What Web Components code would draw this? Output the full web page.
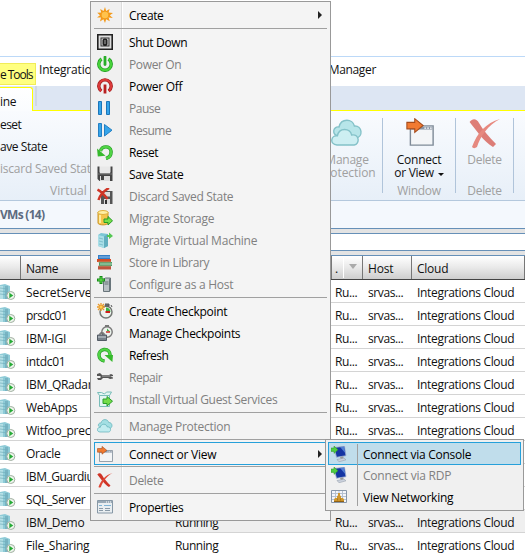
<!DOCTYPE html>
<html lang="en">
<head>
<meta charset="utf-8">
<title>Virtual Machine Manager</title>
<style>
html,body{margin:0;padding:0;width:525px;height:554px;overflow:hidden;background:#fff}
body{font:12px/16px "Open Sans","Noto Sans",sans-serif;color:#111;position:relative}
</style>
</head>
<body>
<vm-app></vm-app>
<script>
const ICONS = {
create:'<path d="M8 0l1.2 4.1L12.6 2l-1 3.6 4.4.4-3.2 2.2L15.8 11l-4.2-.4 1.2 3.6-3.6-2L8 16l-1.6-3.8-3.4 2.3 1-4L0 10.6l3-2.4L.2 5.8l4-.2L3.2 2l3.4 2z" fill="#f39a1b"/><circle cx="8" cy="8" r="3.3" fill="#ffc34d"/>',
shutdown:'<path d="M.8.8h14.400v14.400H.8z" fill="#ddd" stroke="#222" stroke-width="1.600"/><path d="M3.500 3.500h9v9h-9z" fill="#333"/><path d="M4.500 4.500h7v7h-7z" fill="#d8d8d8"/><rect x="5.500" y="4.500" width="5" height="7.500" rx="2" fill="#222"/><path d="M8 6v4" stroke="#aaa"/>',
on:'<path d="M4.500 3A6.200 6.200 0 1 0 11.500 3" fill="none" stroke="#239e25" stroke-width="3.400"/><path d="M4.500 3A6.200 6.200 0 1 0 11.500 3" fill="none" stroke="#48d43a" stroke-width="2"/><path d="M8 1v7.500" stroke="#28ad28" stroke-width="2.800" stroke-linecap="round"/>',
off:'<path d="M4.300 13A6.200 6.200 0 1 1 11.700 13" fill="none" stroke="#9f1c1c" stroke-width="3.400"/><path d="M4.300 13A6.200 6.200 0 1 1 11.700 13" fill="none" stroke="#dc3a3a" stroke-width="2"/><path d="M8 6.500v9" stroke="#b82020" stroke-width="2.800"/>',
pause:'<path d="M1.500 1.500h3v13h-3zm8 0h3v13h-3z" fill="#35a5ea" stroke="#1b75b9"/>',
resume:'<path d="M1.500 1.500h3v13h-3zM7.500 2.500v11.500l7.500-5.800z" fill="#35a5ea" stroke="#247fc2"/>',
reset:'<path d="M3.500 7C5 1.500 13 1.500 14 7c.4 3.500-1.500 6.500-5 7.500" fill="none" stroke="#219a22" stroke-width="3.400"/><path d="M3.500 7C5 1.500 13 1.500 14 7c.4 3.500-1.500 6.500-5 7.500" fill="none" stroke="#50d344" stroke-width="2.200"/><path d="M0 4.500L.8 12.500l7.700-.8z" fill="#36b92c"/>',
save:'<path d="M.5.5h2v6h11v-6h2v14.500h-13l-2-2z" fill="#444"/><path d="M3 .5h10v7H3z" fill="#e8e8e8"/><path d="M3 10h10v5H3z" fill="#ddd"/><path d="M4 10h3v4H4z" fill="#444"/><path d="M1 8h14" stroke="#777"/>',
discard:'<path d="M4 3h11.500v13H4z" fill="#555"/><path d="M7 4h6v4.500H7zM7 11h6v5H7z" fill="#ddd"/><path d="M8 12h2v4H8z" fill="#333"/><path d="M.5 1.500c4 2 7.500 6 10 9.500M12 0C6.500 3 3 7 1.500 12" fill="none" stroke="#cf3526" stroke-width="2.500"/>',
storage:'<path d="M1 2v11c0 2.500 10 2.500 10 0V2z" fill="#f5c54c" stroke="#c99529"/><ellipse cx="6" cy="2.500" rx="5" ry="2" fill="#fff0a4" stroke="#e0af3b"/><path d="M3 5v8" stroke="#ffeaa0" stroke-width="2"/><path d="M7 9h4V6.500l4.500 4.300L11 15v-2.500H7z" fill="#78df49" stroke="#279a26"/>',
machine:'<path d="M1 3l3-2 7 1v12l-4 2-6-2z" fill="#7bc7d5"/><path d="M1 3l6 1.500V16l-6-2z" fill="#a9dee7"/><path d="M7 4.500L11 2v12l-4 2z" fill="#62aebf"/><path d="M2 6l4 1M2 9l4 1M2 12l4 1" stroke="#7fc0cc"/><path d="M10 3h2V.5L16 4l-4 3V5h-2z" fill="#54c753"/>',
library:'<path d="M1 1h12v4H1z" fill="#347ec6"/><path d="M2 3h11" stroke="#94bfe9"/><path d="M0 5h14v3H0z" fill="#d34c26"/><path d="M2 8h13v4H2z" fill="#4b9b67"/><path d="M3 10h12" stroke="#b8dcbf"/><path d="M1 12h13v3.500H1z" fill="#bd543d"/><path d="M1 8h13M1 12h13" stroke="#b7a57b" stroke-width=".7"/>',
host:'<path d="M6.500 3l2-1h5l-1 2v11.500h-6zM12.500 4l1-2v12l-1 1.500" fill="#b9c0c4" stroke="#69757b"/><path d="M7.500 6h4m-4 2h4" stroke="#667277"/><path d="M4 0v8M0 4h8" stroke="#168c18" stroke-width="3"/><path d="M4 1v6M1 4h6" stroke="#68e34e"/>',
checkpoint:'<circle cx="9" cy="9" r="6" fill="#eef2ee" stroke="#737873" stroke-width="1.500"/><path d="M8 1h4v2H8M14 2l1 2" stroke="#555" fill="#777"/><path d="M9 8V4.500A4.500 4.500 0 0 1 13.500 9z" fill="#36b744"/><path d="M8.500 9h4.500" stroke="#ce1e19" stroke-width="2"/><path d="M4 0v8M0 4h8M1 1l6 6M1 7l6-6" stroke="#e99928" stroke-width="1.300"/><circle cx="4" cy="4" r="1.500" fill="#ffce50"/>',
manage:'<circle cx="10" cy="7" r="5.200" fill="#eef2ee" stroke="#777" stroke-width="1.400"/><path d="M8 0h4v2H8" fill="#777"/><path d="M10 6V3.500L13.500 7z" fill="#36b744"/><path d="M9 7h4" stroke="#cc302c" stroke-width="1.500"/><path d="M3 10V8h4v2" fill="none" stroke="#555"/><path d="M.5 10h9v5.500h-9z" fill="#78818a" stroke="#535b64"/><path d="M1 12h8" stroke="#ccd4d9"/>',
refresh:'<path d="M7.500 14C.5 13 0 3.500 7 2.500c4-.3 6 2 6.200 6" fill="none" stroke="#219a22" stroke-width="3.400"/><path d="M7.500 14C.5 13 0 3.500 7 2.500c4-.3 6 2 6.200 6" fill="none" stroke="#50d344" stroke-width="2.200"/><path d="M7.500 8H16l-.6 7z" fill="#36b92c"/>',
repair:'<path d="M0 5l3-1 2 2h7l2-1 2 1v1l-3 .5 3 1v1l-3 .5-2-1H6l-2 2H1L0 9h3l1-1-1-1H0z" fill="#555"/><path d="M5 7h8" stroke="#aaa"/>',
install:'<path d="M2.500 4.500h10v11h-10zM2.500 4.500L.5 1.500h4l3 1.500 2-2h5l-2 3.500" fill="#e2f5f2" stroke="#79bdb9"/><path d="M6 8h4V5.500l5.500 4.700L10 15v-2.500H6z" fill="#75dc49" stroke="#2a9e2c"/>',
cloud:'<path d="M4 9.500C0 9 1 4.500 4 5 5 .3 11 .8 11.700 4.500c4-.3 4.500 5.500.8 6" fill="#a3dfe3" stroke="#5fb0b8" stroke-width=".7"/><path d="M3 14c-4-.4-3-5 .2-4.600C4 5 9.700 5.500 10.300 9c4-.8 4.200 4.700 1.300 5z" fill="#c1ecef" stroke="#5fb0b8" stroke-width=".7"/>',
connect:'<path d="M2.500 4.500h13v11h-13z" fill="#f3f5f7" stroke="#7f8b98" stroke-width=".8"/><path d="M3 5h12v1.600H3z" fill="#8995a6"/><path d="M10.500 5.800h1m.6 0h1m.6 0h1" stroke="#fff" stroke-width=".8"/><path d="M.5 2.500H5V.4L9.800 4.300 5 8.200V6.200H.5z" fill="#f17a31" stroke="#a54b1b" stroke-width=".6"/>',
del:'<path d="M.3 2.500C2 .4 3.800 1 5 3c2 3.500 5 7 8.500 10.500L12 15C7.500 12.500 3.500 6.500.3 2.500z" fill="#cf3326"/><path d="M15.500 1C9.500 4 5.500 10 4 15c-1 .8-2 .7-2.500 0C4 8 8.500 3 15.500 1z" fill="#df4634"/>',
props:'<path d="M.5 1.500h15v12.500H.5z" fill="#e9eef1" stroke="#8798a6"/><path d="M1 2h14v2H1z" fill="#99a9b6"/><path d="M2 6.500h3m2 0h7" stroke="#7fb4d6"/><path d="M2 9.500h4m2 0h5M2 11.500h4m2 0h5" stroke="#8a9aa8"/><path d="M9 3h1m1 0h1m1 0h1" stroke="#fff"/>',
monitor:'<path d="M3 1.500l10.500-1.300 1.500 9.500-9.500 1.600z" fill="#1535a3" stroke="#a5b4ce" stroke-width=".8"/><path d="M9 1l4.200-.5 1 6.500z" fill="#537fd3"/><path d="M9 11l3-.6 1 2.600-3 .6z" fill="#999"/><path d="M6 13.500l7-1.500 2 1.800-7 2z" fill="#cbd2dd" stroke="#8d96a5" stroke-width=".5"/><path d="M0 2h3V0l4 3.700L3 7.400V5.400H0z" fill="#50ce43" stroke="#2b912a" stroke-width=".5"/>',
network:'<path d="M.5 1.500h15v12H.5z" fill="#f3f5fa" stroke="#8796a8"/><path d="M1 4.500h14M1 7.500h14M1 10.500h14M4.500 2v11M8 2v11M11.500 2v11" stroke="#b5c1d1"/><path d="M7 4h2v2.500l1 .5v2h2l1 1.500V12H3v-1.500L4 9h2V7l1-.5z" fill="#cf962c"/><path d="M3 12.500h10" stroke="#8f6117"/><path d="M6.500 9.500v2m3-2v2" stroke="#8f6117" stroke-width=".6"/>',
vm:'<path d="M0 1l5-1 5 2v13H0z" fill="#8ecbd7"/><path d="M0 2h3v13H0z" fill="#b5e0e6"/><path d="M5 2h3v13H5z" fill="#78b4c3"/><path d="M0 4l8 1M0 7l8 1M0 10l8 1" stroke="#72afbc" stroke-width=".7"/><circle cx="10.800" cy="11.500" r="4" fill="#eff5ee" stroke="#a1b0a1"/><path d="M9.300 8.800v5.400l4-2.700z" fill="#26ab36"/>'
};
const BASE='<style>:host{display:block;box-sizing:border-box}*{box-sizing:border-box}</style>';
class Base extends HTMLElement{
  constructor(){super();this.attachShadow({mode:'open'})}
  connectedCallback(){this.shadowRoot.innerHTML=BASE+this.view();this.after?.()}
  attr(n,d=''){return this.getAttribute(n)??d}
}
// Text whose letter spacing is adjusted to occupy a requested width
customElements.define('ui-text',class extends Base{
  view(){return `<style>:host{display:inline-block;white-space:pre;line-height:16px;flex:none}</style><span>${this.attr('t')}</span>`}
  after(){const w=+this.attr('w',0);if(!w)return;const s=this.shadowRoot.querySelector('span');
    const cur=s.getBoundingClientRect().width;const sp=(w+.3-cur)/this.attr('t').length;s.style.letterSpacing=sp.toFixed(3)+'px'}
});
customElements.define('ui-icon',class extends Base{
  view(){const s=this.attr('size',16);return `<style>:host{width:${s}px;height:${s}px;flex:none}svg{display:block}</style><svg width="${s}" height="${s}" viewBox="0 0 16 16">${ICONS[this.attr('name')]}</svg>`}
});
customElements.define('menu-item',class extends Base{
  view(){return `<style>
  :host{display:flex;align-items:center;height:22px;padding:0 4px 0 3px;color:#000}
  :host([off]){color:#808080}
  :host([hot]){outline:1px solid #26a0da;outline-offset:-1px;height:23px;margin-bottom:-1px}
  :host([fill]){background:#c0ddeb}
  ui-icon{margin-right:16px}ui-text{margin-top:2px}
  i{margin-left:auto;margin-right:1px;border:4px solid transparent;border-left-color:#222;border-right:0}
  </style><ui-icon name="${this.attr('icon')}"></ui-icon><ui-text t="${this.attr('t')}" w="${this.attr('w')}"></ui-text>${this.hasAttribute('more')?'<i></i>':''}`}
});
customElements.define('menu-line',class extends Base{
  view(){return '<style>:host{height:5px;padding-top:2px}div{height:1px;background:#a0a0a0}</style><div></div>'}
});
customElements.define('context-menu',class extends Base{
  view(){return `<style>:host{position:absolute;border:1px solid #999;background:linear-gradient(90deg,#f0f0f0 var(--g),#dcdcdc var(--g),#dcdcdc calc(var(--g) + 1px),#fff calc(var(--g) + 1px),#fff calc(var(--g) + 2px),#f4f4f4 calc(var(--g) + 2px));padding:2px 3px}
  :host([flat]){background:#f0f0f0}
  .rule{display:none}:host([flat]) .rule{display:block;position:absolute;left:31px;top:4px;bottom:4px;width:1px;background:#a0a0a0}
  </style><slot></slot><div class="rule"></div>`}
});
const it=(icon,t,w,x='')=>`<menu-item icon="${icon}" t="${t}" w="${w}" ${x}></menu-item>`;
customElements.define('ribbon-group',class extends Base{
  view(){return `<style>:host{display:flex;flex-direction:column;align-items:center;height:75px;border-right:1px solid #b0c4da;color:#a0a0a0;flex:none}
  .i{height:34px;flex:none;display:flex;align-items:flex-start}.a{height:28px;flex:none;display:flex;flex-direction:column;align-items:center}
  .a ui-text{height:13px}.foot{margin-top:3px}.first{color:var(--first,inherit)}.r{display:flex}
  b{border:3px solid transparent;border-top-color:#111;border-bottom:0;margin:8px 0 0 4px}
  </style><div class="i"><slot></slot></div><div class="a first"><ui-text t="${this.attr('a')}" w="${this.attr('aw')}"></ui-text>${this.hasAttribute('b')?`<span class="r"><ui-text t="${this.attr('b')}" w="${this.attr('bw')}"></ui-text>${this.hasAttribute('more')?'<b></b>':''}</span>`:''}</div>${this.attr('foot')?`<div class="foot"><ui-text t="${this.attr('foot')}" w="${this.attr('fw')}"></ui-text></div>`:''}`}
});
customElements.define('app-ribbon',class extends Base{
  view(){return `<style>
  .title{height:56px;background:#fff}.tabs{height:30px;border-top:1px solid #bcd9f8;display:flex;background:#fff}
  .ctx{width:36px;height:22px;margin-top:6px;background:#ffff80;border:1px solid #f0ec58;border-left:0;padding-top:3px}
  .tab{padding-top:5px;margin-left:3px}.clip{width:51px;overflow:hidden}.mgr{margin-left:auto;margin-right:149px}
  .band{height:25px;background:#dde6f3;display:flex;box-shadow:inset 0 -1px #ff0}
  .sel{width:33px;height:24px;margin-top:1px;background:linear-gradient(#fff,#fafcfe);border:solid #ff0;border-width:1px 1px 0 0;border-radius:0 3px 0 0;padding-top:6px}
  .gap{width:2px;height:20px;margin-left:2px;background:#cfd8e5}
  .body{height:90px;background:linear-gradient(#f9fbfe,#e7eff8);border-bottom:1px solid #b4c8dd;display:flex;padding-top:7px;overflow:hidden}
  .left{width:90px;overflow:hidden;flex:none;display:flex;flex-direction:column;margin-top:-1px;color:#a0a0a0}.left ui-text{height:22px;flex:none}
  .left .v{margin:0 0 0 50px}.right{display:flex;margin-left:222px}
  .blk{color:#111}
  </style>
  <div class="title"></div>
  <div class="tabs"><div class="ctx"><ui-text t="e Tools" w="32"></ui-text></div><div class="tab clip"><ui-text t="Integrations" w="65"></ui-text></div><div class="tab mgr"><ui-text t="Manager" w="47"></ui-text></div></div>
  <div class="band"><div class="sel"><ui-text t="ine" w="16"></ui-text></div><div class="gap"></div></div>
  <div class="body"><div class="left"><ui-text class="blk" t="eset" w="21"></ui-text><ui-text class="blk" t="ave State" w="47"></ui-text><ui-text t="iscard Saved State" w="97"></ui-text><ui-text class="v" t="Virtual Machine" w="88"></ui-text></div>
  <div class="right">
  <ribbon-group style="width:71px" a="Manage" aw="43" b="Protection" bw="57"><ui-icon name="cloud" size="32" style="opacity:.75;margin-top:-1px"></ui-icon></ribbon-group>
  <ribbon-group style="width:73px;--first:#111" a="Connect" aw="44" b="or View" bw="39" more foot="Window" fw="43"><ui-icon name="connect" size="28" style="margin-left:2px"></ui-icon></ribbon-group>
  <ribbon-group style="width:58px" a="Delete" aw="34" foot="Delete" fw="34"><ui-icon name="del" size="32" style="opacity:.62;margin-top:-1px"></ui-icon></ribbon-group>
  </div></div>`}
});
const ROWS=[['SecretServer',70],['prsdc01',41],['IBM-IGI',40],['intdc01',39],['IBM_QRadar',66],['WebApps',51],['Witfoo_prec',64],['Oracle',34],['IBM_Guardiu',67],['SQL_Server',59],['IBM_Demo',58],['File_Sharing',63]];
customElements.define('vm-row',class extends Base{
  view(){const low=this.hasAttribute('low'),right=!this.hasAttribute('covered');
  return `<style>:host{display:grid;grid-template-columns:26px 149px 160px 33px 49px 1fr;height:23px;border-bottom:1px solid #d4d4d4;align-items:center;color:#111;background:#fff;overflow:hidden}
  :host([sel]){background:#efefef}ui-icon{margin-top:2px}ui-text{margin-top:3px}.n{width:64px;overflow:hidden}</style><ui-icon name="vm"></ui-icon><div class="n"><ui-text t="${this.attr('t')}" w="${this.attr('w')}"></ui-text></div>${low?'<ui-text t="Running" w="43"></ui-text>':'<span></span>'}${right?'<ui-text t="Ru..." w="22"></ui-text><ui-text t="srvas..." w="35"></ui-text><ui-text t="Integrations Cloud" w="97"></ui-text>':''}`}
});
customElements.define('vm-list',class extends Base{
  view(){return `<style>
  .h{height:27px;background:#f4f8fd;color:#5d6b80;font-weight:bold;padding-top:6px}
  .g{height:6px;background:#e3e3e3;border:solid #6690b8;border-width:1px 0}.s{height:16px;background:#fff}
  .head{height:24px;display:grid;grid-template-columns:21px 311px 31px 49px 1fr;background:linear-gradient(#fff,#e9e9e9 50%,#cecece);border-bottom:1px solid #444;align-items:stretch}
  .head>div{border-right:1px solid #777;display:flex;align-items:center;padding-left:5px}.head ui-text{margin-top:2px}
  .head>.st{padding-left:3px}.st b{width:1px;height:20px;background:#fff;margin-left:5px}.st i{border:4px solid transparent;border-top:5px solid #aaa;border-bottom:0;margin-left:5px;margin-top:-3px}
  </style><div class="h"><ui-text t="VMs (14)" w="44"></ui-text></div><div class="g"></div><div class="s"></div><div class="g"></div>
  <div class="head"><div></div><div><ui-text t="Name" w="32"></ui-text></div><div class="st"><ui-text t="." w="3"></ui-text><b></b><i></i></div><div><ui-text t="Host" w="25"></ui-text></div><div><ui-text t="Cloud" w="31"></ui-text></div></div>
  ${ROWS.map((r,i)=>`<vm-row t="${r[0]}" w="${r[1]}" ${i==10?'sel':''} ${i>9?'low':''} ${i>6&&i<10?'covered':''}></vm-row>`).join('')}`}
});
customElements.define('vm-app',class extends Base{
  view(){const L='<menu-line></menu-line>',o='off';return `<style>:host{width:525px;height:554px;overflow:hidden;position:relative}</style>
  <app-ribbon></app-ribbon><vm-list></vm-list>
  <context-menu style="left:90px;top:1px;width:241px;height:520px;--g:30px">
  ${it('create','Create',34,'more')}${L}
  ${it('shutdown','Shut Down',58)}${it('on','Power On',52,o)}${it('off','Power Off',53)}${it('pause','Pause',31,o)}${it('resume','Resume',42,o)}${it('reset','Reset',29)}${it('save','Save State',54)}${it('discard','Discard Saved State',104,o)}${it('storage','Migrate Storage',85,o)}${it('machine','Migrate Virtual Machine',128,o)}${it('library','Store in Library',80,o)}${it('host','Configure as a Host',104,o)}${L}
  ${it('checkpoint','Create Checkpoint',98)}${it('manage','Manage Checkpoints',111)}${it('refresh','Refresh',39)}${it('repair','Repair',33,o)}${it('install','Install Virtual Guest Services',148,o)}${L}
  ${it('cloud','Manage Protection',101,o)}${L}${it('connect','Connect or View',87,'hot more')}${L}${it('del','Delete',34,o)}${L}${it('props','Properties',54)}
  </context-menu>
  <context-menu flat style="left:325px;top:439px;width:199px;height:72px;padding:2px">
  ${it('monitor','Connect via Console',108,'hot fill')}${it('monitor','Connect via RDP',88,o)}${it('network','View Networking',90)}
  </context-menu>`}
});
</script>
</body>
</html>
